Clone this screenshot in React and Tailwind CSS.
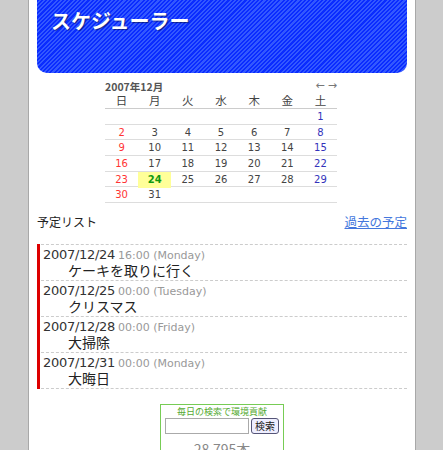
import React from 'react';

const weeks = [
  [null, null, null, null, null, null, 1],
  [2, 3, 4, 5, 6, 7, 8],
  [9, 10, 11, 12, 13, 14, 15],
  [16, 17, 18, 19, 20, 21, 22],
  [23, 24, 25, 26, 27, 28, 29],
  [30, 31, null, null, null, null, null],
];

const days = ['日', '月', '火', '水', '木', '金', '土'];

const events = [
  { date: '2007/12/24', time: '16:00', dow: '(Monday)', title: 'ケーキを取りに行く' },
  { date: '2007/12/25', time: '00:00', dow: '(Tuesday)', title: 'クリスマス' },
  { date: '2007/12/28', time: '00:00', dow: '(Friday)', title: '大掃除' },
  { date: '2007/12/31', time: '00:00', dow: '(Monday)', title: '大晦日' },
];

const dayColor = (i) => (i === 0 ? 'text-[#ff3333]' : i === 6 ? 'text-[#3333bb]' : 'text-[#444]');

export default function App() {
  return (
    <div className="min-h-screen bg-[#cccccc] font-['DejaVu_Sans','Noto_Sans_CJK_JP',sans-serif]">
      <div className="ml-[28px] w-[388px] min-h-[460px] border-x border-[#a8a8a8] bg-white px-[8px]">
        {/* header */}
        <div className="h-[73px] rounded-b-[10px] bg-[#0a30ff] bg-[repeating-linear-gradient(135deg,#0a2cff_0px,#0a2cff_1.5px,#3358ff_1.5px,#3358ff_3px)] pl-[14px] pt-[7px]">
          <h1 className="text-[20px] leading-[28px] font-bold text-white [text-shadow:1px_1px_1px_rgba(0,0,0,0.45)] font-['Noto_Sans_CJK_JP',sans-serif]">
            スケジューラー
          </h1>
        </div>

        {/* calendar */}
        <div className="mt-[8px] w-[232px] ml-[68px]">
          <div className="flex justify-between h-[12px] overflow-visible">
            <span className="text-[10.5px] leading-[12px] font-bold text-[#555] font-['Noto_Sans_CJK_JP',sans-serif]">2007年12月</span>
            <span className="text-[11px] leading-[8px] text-[#777] tracking-[3px] -mr-[3px] mt-[1px]">←→</span>
          </div>
          <div className="grid grid-cols-7 border-b border-[#ccc] h-[16px] font-['Noto_Sans_CJK_JP',sans-serif]">
            {days.map((d) => (
              <div key={d} className="text-center text-[11.5px] leading-[14px] text-[#444]">{d}</div>
            ))}
          </div>
          {weeks.map((w, wi) => (
            <div key={wi} className="grid grid-cols-7 border-b border-[#ddd] h-[15.7px]">
              {w.map((n, i) => (
                <div
                  key={i}
                  className={`text-center text-[10px] leading-[16px] ${
                    n === 24 ? 'bg-[#ffff99] font-bold text-[#119911]' : dayColor(i)
                  }`}
                >
                  {n || ''}
                </div>
              ))}
            </div>
          ))}
        </div>

        {/* list header */}
        <div className="mt-[10px] flex items-center justify-between h-[18px] font-['Noto_Sans_CJK_JP',sans-serif]">
          <span className="text-[12px] text-[#222]">予定リスト</span>
          <a href="#" className="text-[12.5px] text-[#4477dd] underline">過去の予定</a>
        </div>

        {/* events */}
        <div className="mt-[13px] border-l-[3px] border-[#dd0000]">
          <div className="border-t border-dashed border-[#ccc] ml-[1px]">
            {events.map((e) => (
              <div key={e.date} className="border-b border-dashed border-[#ccc] h-[36px] pl-[2px] pt-[3px]">
                <div className="h-[14px] flex items-baseline whitespace-nowrap leading-[14px]">
                  <span className="text-[13px] text-[#333] tracking-[-0.3px]">{e.date}</span>
                  <span className="text-[11px] text-[#999] ml-[3px]">{e.time} {e.dow}</span>
                </div>
                <div className="h-[16px] pl-[25px] text-[14px] leading-[16px] text-[#222] font-['Noto_Sans_CJK_JP',sans-serif]">{e.title}</div>
              </div>
            ))}
          </div>
        </div>

        {/* search widget */}
        <div className="mt-[15px] ml-[123px] w-[124px] border border-[#77cc55] h-[60px] flex flex-col items-center font-['Noto_Sans_CJK_JP',sans-serif]">
          <div className="text-[9px] leading-[11px] text-[#55aa33] mt-[1px]">毎日の検索で環境貢献</div>
          <div className="flex items-center gap-[2px] mt-[1px]">
            <input className="w-[84px] h-[16px] border border-[#aaa]" />
            <button className="h-[16px] px-[3px] text-[10px] leading-[14px] rounded-[3px] border border-[#557] bg-[#eef] text-[#222]">検索</button>
          </div>
          <div className="text-[14px] text-[#888] mt-[8px] leading-[14px]">28,795本</div>
        </div>
      </div>
    </div>
  );
}
